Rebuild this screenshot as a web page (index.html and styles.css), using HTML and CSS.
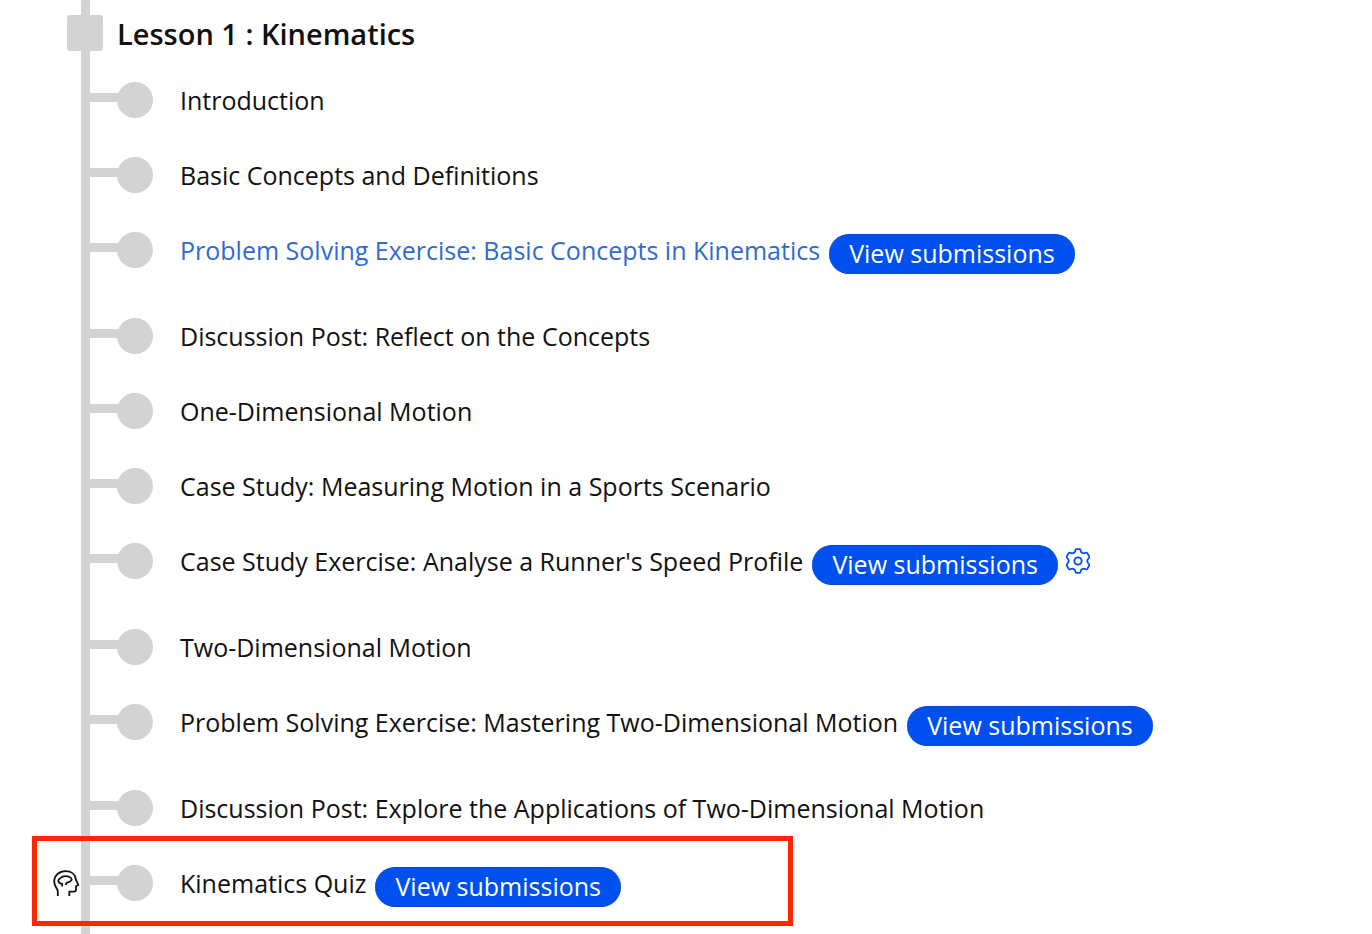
FILE: index.html
```html
<!DOCTYPE html>
<html lang="en">

<head>
  <meta charset="UTF-8" />
  <meta name="viewport" content="width=device-width, initial-scale=1" />
  <title>Lesson 1 : Kinematics</title>
  <link rel="stylesheet" href="styles.css">
</head>

<body>
  <main class="outline">
    <header class="lesson">
      <span class="lesson-marker"></span>
      <h2>Lesson 1 : Kinematics</h2>
    </header>

    <ul class="topics">
      <li class="topic">
        <span class="gutter"></span><span class="branch"></span><span class="dot"></span>
        <a href="#" class="title">Introduction</a>
      </li>
      <li class="topic">
        <span class="gutter"></span><span class="branch"></span><span class="dot"></span>
        <a href="#" class="title">Basic Concepts and Definitions</a>
      </li>
      <li class="topic">
        <span class="gutter"></span><span class="branch"></span><span class="dot"></span>
        <a href="#" class="title active">Problem Solving Exercise: Basic Concepts in Kinematics</a>
        <button type="button" class="pill">View submissions</button>
      </li>
      <li class="topic">
        <span class="gutter"></span><span class="branch"></span><span class="dot"></span>
        <a href="#" class="title">Discussion Post: Reflect on the Concepts</a>
      </li>
      <li class="topic">
        <span class="gutter"></span><span class="branch"></span><span class="dot"></span>
        <a href="#" class="title">One-Dimensional Motion</a>
      </li>
      <li class="topic">
        <span class="gutter"></span><span class="branch"></span><span class="dot"></span>
        <a href="#" class="title">Case Study: Measuring Motion in a Sports Scenario</a>
      </li>
      <li class="topic">
        <span class="gutter"></span><span class="branch"></span><span class="dot"></span>
        <a href="#" class="title">Case Study Exercise: Analyse a Runner's Speed Profile</a>
        <button type="button" class="pill">View submissions</button>
        <button type="button" class="settings" aria-label="Settings">
          <svg viewBox="-13 -13 26 26" width="26" height="26">
            <path d="M-2 -11.8H2C3 -11 2.4 -9.6 3.2 -8.8C4.6 -7.4 6 -7.4 7.6 -8.2Q8.8 -8.6 9.6 -7.4L11.2 -4.6Q11.6 -3.4 10.6 -2.6C8.8 -1.2 8.8 1.2 10.6 2.6Q11.6 3.4 11.2 4.6L9.6 7.4Q8.8 8.6 7.6 8.2C6 7.4 4.6 7.4 3.2 8.8C2.4 9.6 3 11 2 11.8H-2C-3 11 -2.4 9.6 -3.2 8.8C-4.6 7.4 -6 7.4 -7.6 8.2Q-8.8 8.6 -9.6 7.4L-11.2 4.6Q-11.6 3.4 -10.6 2.6C-8.8 1.2 -8.8 -1.2 -10.6 -2.6Q-11.6 -3.4 -11.2 -4.6L-9.6 -7.4Q-8.8 -8.6 -7.6 -8.2C-6 -7.4 -4.6 -7.4 -3.2 -8.8C-2.4 -9.6 -3 -11 -2 -11.8Z" />
            <circle r="3.7" />
          </svg>
        </button>
      </li>
      <li class="topic">
        <span class="gutter"></span><span class="branch"></span><span class="dot"></span>
        <a href="#" class="title">Two-Dimensional Motion</a>
      </li>
      <li class="topic">
        <span class="gutter"></span><span class="branch"></span><span class="dot"></span>
        <a href="#" class="title">Problem Solving Exercise: Mastering Two-Dimensional Motion</a>
        <button type="button" class="pill">View submissions</button>
      </li>
      <li class="topic">
        <span class="gutter"></span><span class="branch"></span><span class="dot"></span>
        <a href="#" class="title">Discussion Post: Explore the Applications of Two-Dimensional Motion</a>
      </li>
      <li class="topic highlight">
        <span class="gutter">
          <svg viewBox="0 0 27 27" width="27" height="27">
            <path d="M4.8 26V21.5C4.8 18.5 1.2 17 1.2 11.5C1.2 5.5 6 1.2 12.5 1.2C18.5 1.2 22.3 4.5 22.8 9.3L25.4 15L23 16.2V19.5Q23 21.6 21 21.6H16.3V26" />
            <path d="M9.2 16.4V14C6.5 13.4 5.2 12 5.4 10.4C5.7 8.8 7 8.4 8 7.6C10 5.8 14.5 5.6 16.2 7C18.4 7.6 19.1 9 18.3 10.4C17.2 12.2 15 11.8 13.8 12.8C13 13.5 13 14.2 12.8 15" />
          </svg>
        </span><span class="branch"></span><span class="dot"></span>
        <a href="#" class="title">Kinematics Quiz</a>
        <button type="button" class="pill">View submissions</button>
      </li>
    </ul>
  </main>
</body>

</html>
```

FILE: styles.css
```css
* {
  box-sizing: border-box;
}

body {
  margin: 0;
  background-color: #fff;
  color: #111;
  font-family: "Open Sans", sans-serif;
  font-size: 25px;
  line-height: 36px;
}

.outline {
  position: relative;
  min-height: 100vh;
  padding-top: 15px;
  padding-left: 53px;
}

/* vertical rail behind the markers */
.outline::before {
  content: "";
  position: absolute;
  top: 0;
  bottom: 0;
  left: 81px;
  width: 9px;
  background-color: #d3d3d3;
}

.lesson {
  display: flex;
  gap: 14px;
  margin-bottom: 29px;
  padding-left: 14px;
}

.lesson-marker {
  flex: none;
  width: 36px;
  height: 36px;
  border-radius: 3px;
  background-color: #d3d3d3;
}

.lesson h2 {
  margin: 0;
  font-size: 29px;
  font-weight: 600;
  line-height: 38px;
}

.topics {
  margin: 0;
  padding: 0;
  list-style: none;
}

.topic {
  display: flex;
  align-items: flex-start;
  padding-bottom: 39px;
}

.topic:last-child {
  padding-bottom: 0;
}

.gutter {
  flex: none;
  width: 28px;
  padding-top: 5px;
}

.gutter svg,
.settings svg {
  display: block;
  fill: none;
  stroke: currentColor;
  stroke-width: 1.8;
  stroke-linejoin: round;
}

.branch {
  flex: none;
  width: 40px;
  height: 9px;
  margin-top: 11px;
  background-color: #d3d3d3;
}

.dot {
  flex: none;
  width: 36px;
  height: 36px;
  margin-left: -4px;
  border-radius: 50%;
  background-color: #d3d3d3;
}

.title {
  margin-left: 27px;
  color: inherit;
  text-decoration: none;
}

.title.active {
  color: #2f6bd0;
}

.pill {
  flex: none;
  height: 40px;
  margin: 2px 0 5px 9px;
  padding: 0 20px 2px;
  border: 1px solid #0848d0;
  border-width: 1px 0;
  border-radius: 20px;
  background-color: #0050f0;
  color: #fff;
  font: inherit;
  cursor: pointer;
}

.settings {
  flex: none;
  margin: 5px 0 0 7px;
  padding: 0;
  border: none;
  background: none;
  color: #0050f0;
  cursor: pointer;
}

.highlight {
  position: relative;
}

/* red frame drawn over the row */
.highlight::after {
  content: "";
  position: absolute;
  top: -29px;
  left: -21px;
  box-sizing: border-box;
  width: 761px;
  height: 90px;
  border: 5px solid #ff2600;
  pointer-events: none;
}
```
